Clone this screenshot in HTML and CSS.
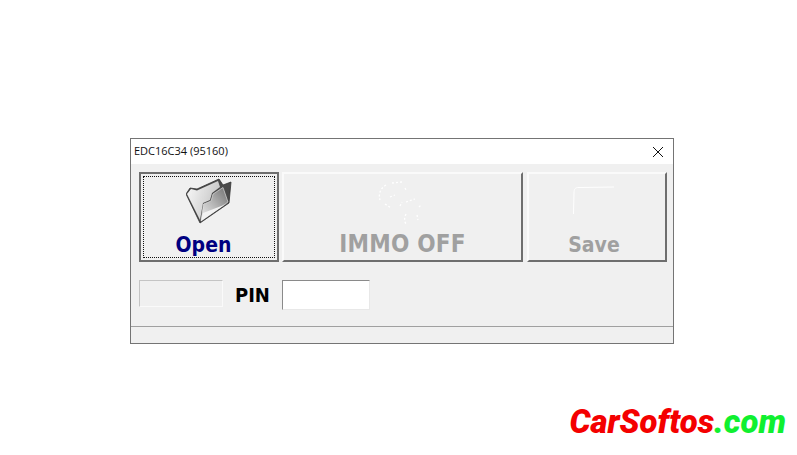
FILE: index.html

```html
<!DOCTYPE html>
<html lang="en">
<head>
  <meta charset="UTF-8">
  <title>EDC16C34 (95160)</title>
  <link rel="stylesheet" href="styles.css">
</head>
<body>
  <div class="window">
    <div class="titlebar">
      <span class="title">EDC16C34 (95160)</span>
      <svg class="close" width="12" height="12" viewBox="0 0 12 12"><path d="M1 1L11 11M11 1L1 11" stroke="#111" stroke-width="1" fill="none"/></svg>
    </div>
    <div class="content">
      <div class="buttons">
        <button class="btn btn-open">
          <span class="focus">
            <svg class="icon-folder" width="46" height="46" viewBox="0 0 46 46">
              <defs>
                <linearGradient id="inner" x1="0" y1="1" x2="1" y2="0">
                  <stop offset="0" stop-color="#f0f0f0"/>
                  <stop offset="0.5" stop-color="#b4b4b4"/>
                  <stop offset="1" stop-color="#707070"/>
                </linearGradient>
                <linearGradient id="flap" x1="0" y1="0" x2="1" y2="0.4">
                  <stop offset="0" stop-color="#fafafa"/>
                  <stop offset="1" stop-color="#c4c4c4"/>
                </linearGradient>
              </defs>
              <path d="M0 16L4 10L11 11L33 1L37 7L45 4L43 25L14 45Z" fill="#4a4a4a" stroke="#333" stroke-width="0.8" stroke-linejoin="round"/>
              <path d="M1 16L5 11L11 12.500L32 3L34 9L26 15L24 22L17 25L14 42Z" fill="url(#flap)"/>
              <path d="M15 43L17.500 26L25 23L27 16L37 9.500L42 24Z" fill="url(#inner)" stroke="#ececec" stroke-width="0.6"/>
              <path d="M15 43L17 35L38 27L41.500 25Z" fill="#f2f2f2"/>
            </svg>
            <span class="label label-open">Open</span>
          </span>
        </button>
        <button class="btn btn-immo" disabled>
          <svg class="ghost" width="52" height="46" viewBox="0 0 52 46">
            <path d="M9 5C4 8 1 13 3 20M15 3L25 2M28 8L29 10M13 17L18 15M8 24L14 28M23 26L25 22M29 22L38 19M42 27L44 25M29 34C27 38 27 42 30 45M40 35L41 40" stroke="#fff" stroke-width="1.3" stroke-dasharray="2 2" fill="none"/>
          </svg>
          <span class="label">IMMO OFF</span>
        </button>
        <button class="btn btn-save" disabled>
          <svg class="ghost ghost-save" width="44" height="46" viewBox="0 0 44 46">
            <path d="M1.500 30L2 9C2 5 3 3.500 7 3.500L42 3" stroke="#fff" stroke-width="1" fill="none"/>
          </svg>
          <span class="label label-save">Save</span>
        </button>
      </div>
      <div class="pin-row">
        <div class="readout"></div>
        <label class="pin-label" for="pin">PIN</label>
        <input class="pin-input" id="pin" type="text">
      </div>
    </div>
    <div class="statusbar"></div>
  </div>
  <div class="brand"><span class="brand-red">CarSoftos</span><span class="brand-green">.com</span></div>
</body>
</html>
```

FILE: styles.css

```css
html, body {
  margin: 0;
  height: 100%;
}
body {
  background: #fff;
  font-family: "DejaVu Sans Condensed", "DejaVu Sans", sans-serif;
  padding: 138px 11px 0 130px;
  box-sizing: border-box;
  overflow: hidden;
}
.window {
  width: 544px;
  height: 206px;
  box-sizing: border-box;
  border: 1px solid #747474;
  background: #f0f0f0;
  display: flex;
  flex-direction: column;
}
.titlebar {
  height: 25px;
  background: #fff;
  display: flex;
  align-items: center;
  justify-content: space-between;
  padding: 0 9px 2px 3px;
  box-sizing: border-box;
  flex: none;
}
.title {
  font-family: "Open Sans", sans-serif;
  font-size: 11px;
  color: #111;
}
.close {
  display: block;
  margin-top: 2px;
}
.content {
  flex: 1;
  padding: 8px 6px 0 8px;
}
.buttons {
  display: flex;
  gap: 3px;
}
.btn {
  height: 90px;
  margin: 0;
  padding: 0;
  box-sizing: border-box;
  background: #f0f0f0;
  border: 2px solid;
  border-color: #fafafa #6e6e6e #6e6e6e #fafafa;
  font-family: inherit;
  display: flex;
  flex-direction: column;
  align-items: center;
}
.btn-open {
  width: 140px;
  border-color: #6e6e6e;
  padding: 2px;
}
.btn-immo {
  width: 241px;
  padding-top: 6px;
}
.btn-save {
  width: 140px;
  margin-left: 1px;
  padding-top: 10px;
}
.focus {
  flex: 1;
  align-self: stretch;
  border: 1px dotted #111;
  background: #f0f0f0;
  display: flex;
  flex-direction: column;
  align-items: center;
  padding-top: 1px;
}
.icon-folder {
  display: block;
  margin-left: -1px;
}
.ghost {
  display: block;
}
.ghost-save {
  margin-left: -6px;
}
.label {
  font-size: 21px;
  font-weight: bold;
  line-height: 26px;
  color: #a0a0a0;
}
.btn-immo .label {
  font-size: 24px;
  letter-spacing: 0.2px;
  margin-top: 5px;
}
.label-open {
  color: #000080;
  line-height: 24px;
  margin: 9px 11px 0 0;
}
.label-save {
  margin: 2px 6px 0 0;
}
.pin-row {
  display: flex;
  align-items: center;
  margin-top: 18px;
}
.readout {
  width: 84px;
  height: 27px;
  align-self: flex-start;
  box-sizing: border-box;
  border: 1px solid;
  border-color: #c4c4c4 #fafafa #fafafa #c4c4c4;
}
.pin-label {
  font-size: 20px;
  font-weight: bold;
  color: #000;
  margin-left: 12px;
  width: 47px;
}
.pin-input {
  width: 88px;
  height: 30px;
  box-sizing: border-box;
  margin: 0;
  padding: 0;
  background: #fff;
  border: 1px solid;
  border-color: #8a8a8a #e8e8e8 #e8e8e8 #8a8a8a;
  outline: none;
}
.statusbar {
  height: 16px;
  flex: none;
  border-top: 1px solid #a0a0a0;
}
.brand {
  margin-top: 60px;
  text-align: right;
  font-family: Roboto, sans-serif;
  font-size: 33px;
  font-weight: 900;
  font-style: italic;
  line-height: 36px;
}
.brand-red {
  color: #f40000;
}
.brand-green {
  color: #10f030;
}
```
